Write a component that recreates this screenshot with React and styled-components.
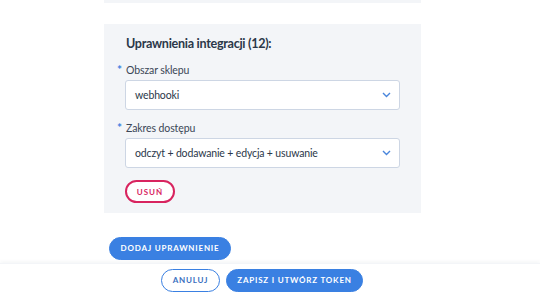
import React from 'react';
import styled, { createGlobalStyle } from 'styled-components';

const GlobalStyle = createGlobalStyle`
  html, body {
    margin: 0;
    background: #ffffff;
    font-family: Lato, "Noto Sans", sans-serif;
    color: #2c3a4b;
  }
`;

const Page = styled.div`
  width: 540px;
  height: 296px;
  overflow: hidden;
  display: flex;
  flex-direction: column;
`;

const PrevPanelEdge = styled.div`
  margin-left: 104px;
  width: 317px;
  height: 3px;
  background: #f3f5f8;
`;

const Panel = styled.section`
  margin: 21px 0 0 104px;
  width: 317px;
  box-sizing: border-box;
  padding: 12px 21px 10px 21px;
  background: #f3f5f8;
  display: flex;
  flex-direction: column;
`;

const Title = styled.h3`
  margin: 0 0 11px 1px;
  font-size: 12.6px;
  line-height: 16px;
  font-weight: 700;
  letter-spacing: -0.3px;
  color: #2b3849;
`;

const Label = styled.label`
  position: relative;
  display: block;
  font-size: 10.5px;
  line-height: 14px;
  letter-spacing: -0.1px;
  color: #3a4656;
  margin: ${p => (p.$first ? '0' : '11px')} 0 3px 1px;

  &::before {
    content: '*';
    position: absolute;
    left: -9px;
    top: 0;
    color: #3b7fe0;
    font-size: 12px;
    font-weight: 700;
  }
`;

const Select = styled.div`
  height: 30px;
  box-sizing: border-box;
  background: #ffffff;
  border: 1px solid #cdd6e4;
  border-radius: 3px;
  padding: 0 8px 0 9px;
  display: flex;
  align-items: center;
  justify-content: space-between;
  font-size: 10.5px;
  letter-spacing: -0.15px;
  color: #2b3849;
`;

const RemoveButton = styled.button`
  align-self: flex-start;
  margin-top: 12px;
  width: 50px;
  height: 23px;
  border: 2px solid #d8245f;
  border-radius: 12px;
  background: #ffffff;
  color: #d8245f;
  font-family: inherit;
  font-weight: 700;
  font-size: 8px;
  letter-spacing: 1px;
  padding: 0;
`;

const PillButton = styled.button`
  height: 23px;
  border-radius: 12px;
  box-sizing: border-box;
  font-family: inherit;
  font-weight: 700;
  font-size: 8px;
  letter-spacing: 0.8px;
  padding: 0;
  width: ${p => p.$w}px;
  border: 1.5px solid #3a80e2;
  background: ${p => (p.$outline ? '#ffffff' : '#3a80e2')};
  color: ${p => (p.$outline ? '#3a6fc0' : '#ffffff')};
`;

const AddRow = styled.div`
  margin: 22px 0 0 109px;
`;

const Footer = styled.footer`
  margin-top: 3px;
  padding: 5px 16px 0 0;
  display: flex;
  justify-content: center;
  gap: 6px;
  box-shadow: 0 -2px 3px rgba(30, 50, 80, 0.04);
  border-top: 1px solid #f3f5f8;
`;

function Chevron() {
  return (
    <svg width="9" height="6" viewBox="0 0 9 6">
      <polyline points="1,1 4.5,4.5 8,1" fill="none" stroke="#4a86dc" strokeWidth="1.4" />
    </svg>
  );
}

export default function App() {
  return (
    <Page>
      <GlobalStyle />
      <PrevPanelEdge />
      <Panel>
        <Title>Uprawnienia integracji (12):</Title>
        <Label $first>Obszar sklepu</Label>
        <Select>
          <span>webhooki</span>
          <Chevron />
        </Select>
        <Label>Zakres dostępu</Label>
        <Select>
          <span>odczyt + dodawanie + edycja + usuwanie</span>
          <Chevron />
        </Select>
        <RemoveButton>USUŃ</RemoveButton>
      </Panel>
      <AddRow>
        <PillButton $w={122}>DODAJ UPRAWNIENIE</PillButton>
      </AddRow>
      <Footer>
        <PillButton $outline $w={59}>ANULUJ</PillButton>
        <PillButton $w={137}>ZAPISZ I UTWÓRZ TOKEN</PillButton>
      </Footer>
    </Page>
  );
}
